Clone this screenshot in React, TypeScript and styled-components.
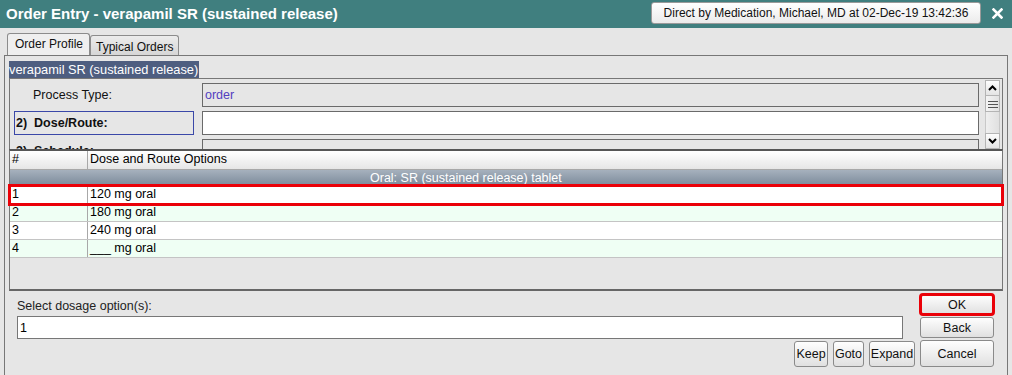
import styled, { createGlobalStyle } from 'styled-components';

const GlobalStyle = createGlobalStyle`
  html, body {
    margin: 0;
    padding: 0;
    background: #e6e6e6;
  }
  body {
    font-family: "Liberation Sans", Arial, sans-serif;
    font-size: 12.5px;
    color: #000;
  }
  * {
    box-sizing: border-box;
  }
`;

const doseOptions = ['120 mg oral', '180 mg oral', '240 mg oral', '___ mg oral'];

const App = () => {
  return (
    <>
      <GlobalStyle />
      <Window>
        <TitleBar>
          <Title>Order Entry - verapamil SR (sustained release)</Title>
          <UserButton>Direct by Medication, Michael, MD at 02-Dec-19 13:42:36</UserButton>
          <CloseIcon width='11' height='11' viewBox='0 0 11 11'>
            <path d='M1.5 1.5 L9.5 9.5 M9.5 1.5 L1.5 9.5' stroke='#fff' strokeWidth='2.6' strokeLinecap='square' />
          </CloseIcon>
        </TitleBar>

        <TabBar>
          <Tab $active>Order Profile</Tab>
          <Tab>Typical Orders</Tab>
        </TabBar>

        <Panel>
          <SectionTitle>verapamil SR (sustained release)</SectionTitle>

          <FormArea>
            <FormRows>
              <FormRow>
                <FieldLabel>Process Type:</FieldLabel>
                <Field $readOnly>order</Field>
              </FormRow>
              <FormRow>
                <FieldLabel $boxed>2)&nbsp; Dose/Route:</FieldLabel>
                <Field />
              </FormRow>
              <FormRow>
                <FieldLabel $bold>3)&nbsp; Schedule:</FieldLabel>
                <Field $readOnly />
              </FormRow>
            </FormRows>
            <ScrollBar>
              <ScrollButton>
                <svg width='9' height='6' viewBox='0 0 9 6'>
                  <path d='M1 5 L4.5 1.5 L8 5' stroke='#000' strokeWidth='2' fill='none' />
                </svg>
              </ScrollButton>
              <ScrollThumb>
                <svg width='10' height='8' viewBox='0 0 10 8'>
                  <path d='M0 1.5 H10 M0 4.5 H10 M0 7.5 H10' stroke='#555' strokeWidth='1' />
                </svg>
              </ScrollThumb>
              <ScrollTrack />
              <ScrollButton>
                <svg width='9' height='6' viewBox='0 0 9 6'>
                  <path d='M1 1 L4.5 4.5 L8 1' stroke='#000' strokeWidth='2' fill='none' />
                </svg>
              </ScrollButton>
            </ScrollBar>
          </FormArea>

          <OptionsTable>
            <HeaderRow>
              <Cell $first>#</Cell>
              <Cell>Dose and Route Options</Cell>
            </HeaderRow>
            <GroupRow>Oral: SR (sustained release) tablet</GroupRow>
            {doseOptions.map((option, i) => (
              <DataRow key={option} $alt={i % 2 === 1} $selected={i === 0}>
                <Cell $first>{i + 1}</Cell>
                <Cell>{option}</Cell>
              </DataRow>
            ))}
          </OptionsTable>

          <Footer>
            <SelectLabel>Select dosage option(s):</SelectLabel>
            <DialogButton $highlight>OK</DialogButton>
            <SelectInput>1</SelectInput>
            <DialogButton>Back</DialogButton>
            <SmallButtons>
              <DialogButton $width={34}>Keep</DialogButton>
              <DialogButton $width={31}>Goto</DialogButton>
              <DialogButton $width={46}>Expand</DialogButton>
            </SmallButtons>
            <DialogButton>Cancel</DialogButton>
          </Footer>
        </Panel>
      </Window>
    </>
  );
};

export default App;

const Window = styled.div`
  width: 1012px;
  height: 375px;
  display: flex;
  flex-direction: column;
  overflow: hidden;
  background: #e6e6e6;
`;

const TitleBar = styled.div`
  height: 28px;
  flex-shrink: 0;
  display: flex;
  align-items: center;
  padding: 0 9px 0 6px;
  background: #407f7f;
`;

const Title = styled.div`
  flex: 1;
  color: #fff;
  font-size: 15px;
  font-weight: 700;
  padding-bottom: 1px;
`;

const UserButton = styled.div`
  width: 330px;
  height: 22px;
  margin-top: -2px;
  display: flex;
  align-items: center;
  justify-content: center;
  border: 1px solid #9a9a9a;
  border-radius: 3px;
  background: linear-gradient(#ffffff, #ebebeb);
  font-size: 12px;
  color: #111;
`;

const CloseIcon = styled.svg`
  margin-left: 11px;
  margin-top: -2px;
`;

const TabBar = styled.div`
  height: 27px;
  flex-shrink: 0;
  display: flex;
  align-items: flex-end;
  padding-left: 7px;
`;

const Tab = styled.div<{ $active?: boolean }>`
  height: ${({ $active }) => ($active ? '22px' : '20px')};
  display: flex;
  align-items: center;
  padding: ${({ $active }) => ($active ? '0 6px 1px 7px' : '2px 5px 0 5px')};
  border: 1px solid #8c8c8c;
  border-bottom: none;
  border-radius: 3px 3px 0 0;
  background: ${({ $active }) => ($active ? '#efefef' : 'linear-gradient(#ececec, #d6d6d6)')};
  font-size: 12px;
  color: #111;
`;

const Panel = styled.div`
  flex: 1;
  display: flex;
  flex-direction: column;
  margin: 0 4px;
  padding: 5px 4px 0;
  border: 1px solid #777;
  border-bottom: none;
`;

const SectionTitle = styled.div`
  align-self: flex-start;
  height: 17px;
  line-height: 17px;
  padding: 0 1px 0 0;
  background: #4e5e80;
  color: #fff;
  font-size: 12.8px;
`;

const FormArea = styled.div`
  height: 71px;
  flex-shrink: 0;
  display: flex;
  border: 1px solid #777;
  border-bottom: none;
  overflow: hidden;
`;

const FormRows = styled.div`
  flex: 1;
  display: flex;
  flex-direction: column;
  gap: 4px;
  padding: 4px 0 0 4px;
  overflow: hidden;
`;

const FormRow = styled.div`
  height: 24px;
  flex-shrink: 0;
  display: flex;
  gap: 8px;
`;

const FieldLabel = styled.div<{ $boxed?: boolean; $bold?: boolean }>`
  width: 180px;
  display: flex;
  align-items: center;
  padding-left: ${({ $boxed, $bold }) => ($boxed || $bold ? '1px' : '18px')};
  border: 1px solid ${({ $boxed }) => ($boxed ? '#3a48a8' : 'transparent')};
  font-weight: ${({ $boxed, $bold }) => ($boxed || $bold ? 700 : 400)};
  color: #111;
`;

const Field = styled.div<{ $readOnly?: boolean }>`
  flex: 1;
  display: flex;
  align-items: center;
  padding-left: 2px;
  border: 1px solid #6a6a6a;
  background: ${({ $readOnly }) => ($readOnly ? '#e6e6e6' : '#fff')};
  color: #5340c0;
`;

const ScrollBar = styled.div`
  width: 15px;
  flex-shrink: 0;
  display: flex;
  flex-direction: column;
  margin: 1px 2px 0 6px;
`;

const ScrollButton = styled.div`
  height: 16px;
  display: flex;
  align-items: center;
  justify-content: center;
  border: 1px solid #b4b4b4;
  background: linear-gradient(#fdfdfd, #e4e4e4);
`;

const ScrollThumb = styled(ScrollButton)`
  border-top: none;
  background: linear-gradient(90deg, #f4f4f4, #e2e2e2);
`;

const ScrollTrack = styled.div`
  flex: 1;
  border-left: 1px solid #c8c8c8;
  border-right: 1px solid #c8c8c8;
  background: linear-gradient(90deg, #efefef, #e0e0e0);
`;

const OptionsTable = styled.div`
  height: 142px;
  flex-shrink: 0;
  display: flex;
  flex-direction: column;
  border-top: 2px solid #555;
  border-left: 1px solid #777;
  border-right: 1px solid #777;
  border-bottom: 2px solid #666;
`;

const HeaderRow = styled.div`
  height: 19px;
  display: grid;
  grid-template-columns: 78px 1fr;
  border-bottom: 1px solid #a8a8a8;
  background: linear-gradient(#ffffff, #e6e6e6);
`;

const Cell = styled.div<{ $first?: boolean }>`
  padding-left: 2px;
  line-height: 17px;
  white-space: nowrap;
  border-right: ${({ $first }) => ($first ? '1px solid #a8a8a8' : 'none')};
`;

const GroupRow = styled.div`
  height: 16px;
  line-height: 16px;
  padding-left: 360px;
  background: linear-gradient(#a6b1bd, #7a8999);
  color: #fff;
`;

const DataRow = styled.div<{ $alt?: boolean; $selected?: boolean }>`
  height: 18px;
  display: grid;
  grid-template-columns: 78px 1fr;
  border-bottom: 1px solid #c4c4c4;
  background: ${({ $alt }) => ($alt ? '#effff4' : '#fff')};
  outline: ${({ $selected }) => ($selected ? '3px solid #ea0008' : 'none')};
  outline-offset: -1px;
  position: relative;
  z-index: ${({ $selected }) => ($selected ? 1 : 0)};
`;

const Footer = styled.div`
  display: grid;
  grid-template-columns: 1fr 74px;
  grid-template-rows: 21px 21px 27px;
  column-gap: 5px;
  row-gap: 2px;
  padding: 3px 9px 0 8px;
`;

const SelectLabel = styled.div`
  align-self: center;
  padding-top: 3px;
  color: #222;
`;

const SelectInput = styled.div`
  margin: -1px 12px 0 0;
  height: 23px;
  display: flex;
  align-items: center;
  padding-left: 2px;
  border: 1px solid #777;
  background: #fff;
`;

const SmallButtons = styled.div`
  display: flex;
  justify-content: flex-end;
  gap: 5px;
  margin-top: 1px;
`;

const DialogButton = styled.div<{ $highlight?: boolean; $width?: number }>`
  width: ${({ $width }) => ($width ? `${$width}px` : 'auto')};
  display: flex;
  align-items: center;
  justify-content: center;
  border: 1px solid #8a8a8a;
  border-radius: 3px;
  background: linear-gradient(#fefefe, #e0e0e0);
  font-size: 12.5px;
  color: #111;
  outline: ${({ $highlight }) => ($highlight ? '3px solid #ea0008' : 'none')};
  outline-offset: -2px;
`;
